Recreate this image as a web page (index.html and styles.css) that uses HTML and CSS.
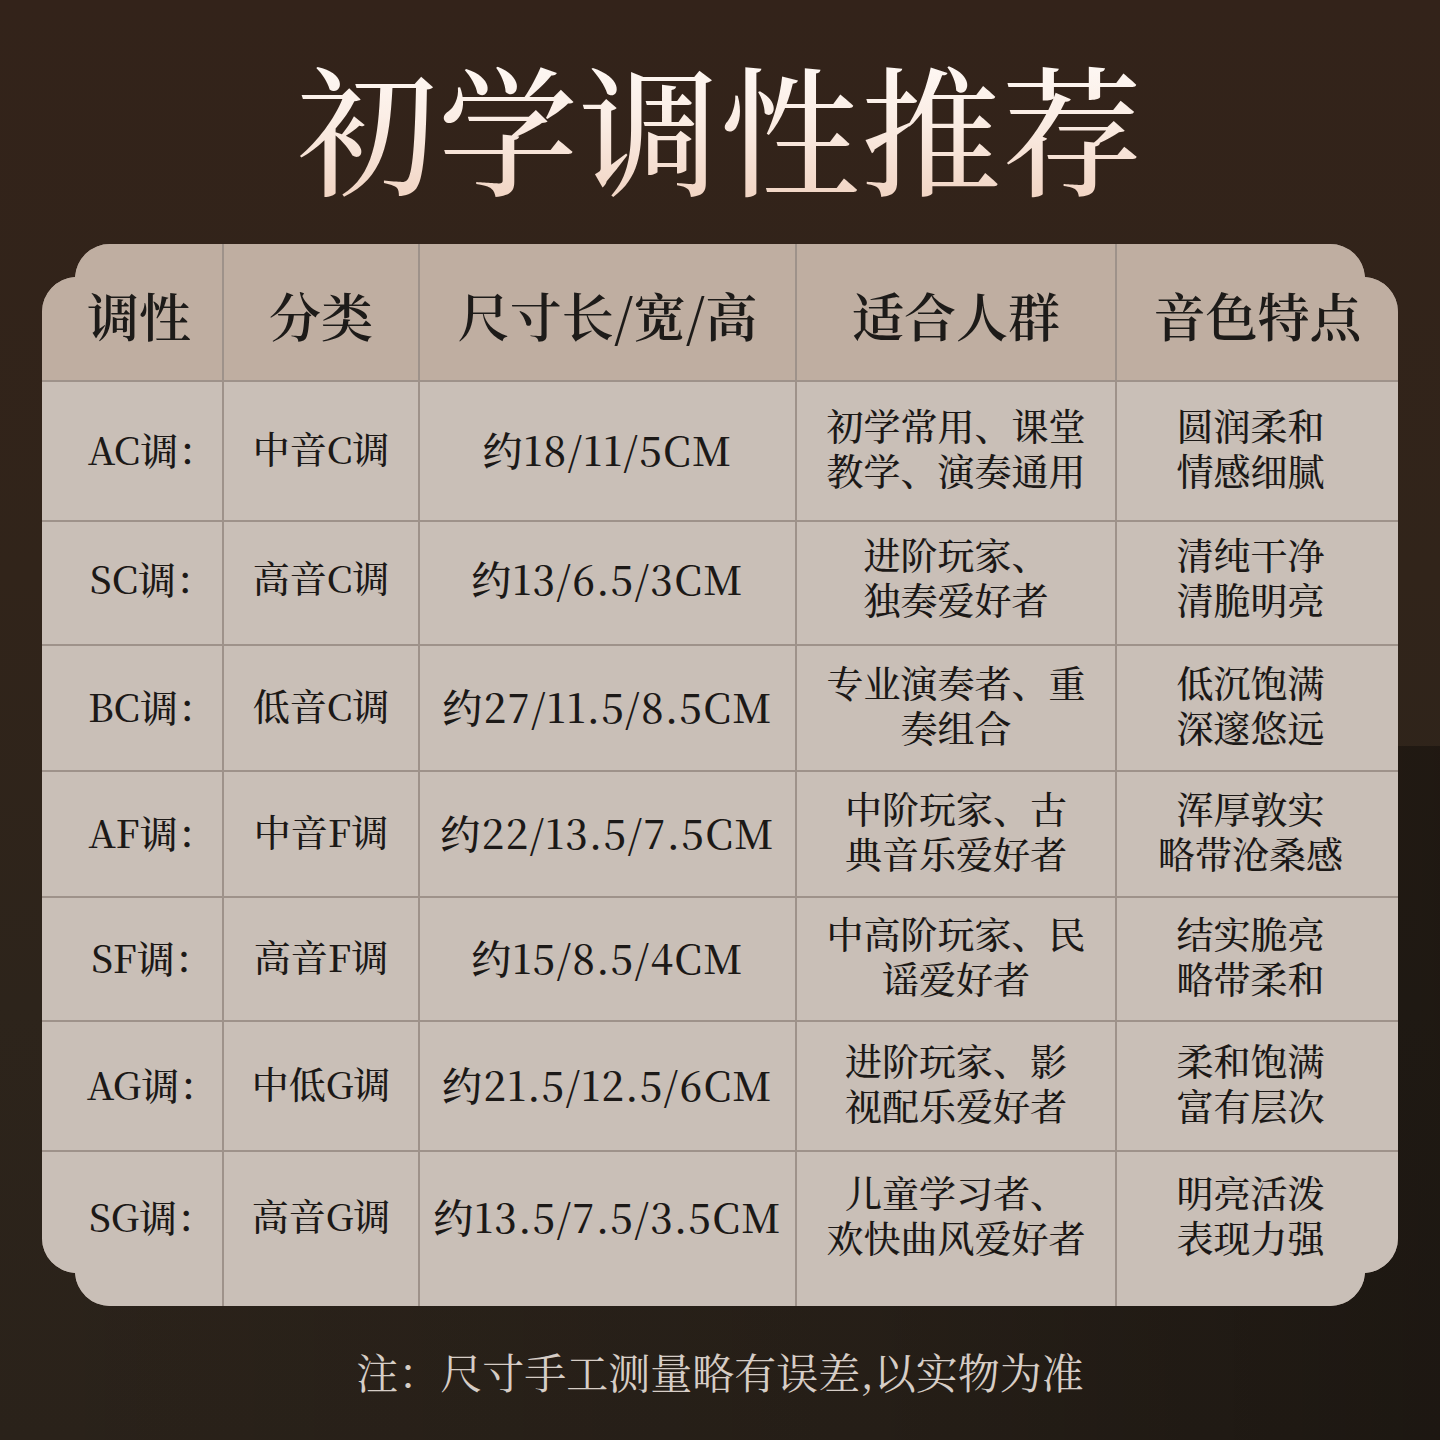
FILE: index.html
```html
<!DOCTYPE html>
<html lang="zh-CN">
<head>
<meta charset="utf-8">
<title>初学调性推荐</title>
<link rel="stylesheet" href="styles.css">
</head>
<body>
<div class="page">
  <header class="title-area">
    <h1 class="title">初学调性推荐</h1>
  </header>
  <div class="table">
    <div class="cell head first">调性</div>
    <div class="cell head">分类</div>
    <div class="cell head">尺寸长/宽/高</div>
    <div class="cell head">适合人群</div>
    <div class="cell head">音色特点</div>

    <div class="cell key">AC调：</div>
    <div class="cell">中音C调</div>
    <div class="cell size">约18/11/5CM</div>
    <div class="cell">初学常用、课堂<br>教学、演奏通用</div>
    <div class="cell tone">圆润柔和<br>情感细腻</div>

    <div class="cell key up">SC调：</div>
    <div class="cell up">高音C调</div>
    <div class="cell size up">约13/6.5/3CM</div>
    <div class="cell up">进阶玩家、<br>独奏爱好者</div>
    <div class="cell tone up">清纯干净<br>清脆明亮</div>

    <div class="cell key">BC调：</div>
    <div class="cell">低音C调</div>
    <div class="cell size">约27/11.5/8.5CM</div>
    <div class="cell">专业演奏者、重<br>奏组合</div>
    <div class="cell tone">低沉饱满<br>深邃悠远</div>

    <div class="cell key">AF调：</div>
    <div class="cell">中音F调</div>
    <div class="cell size">约22/13.5/7.5CM</div>
    <div class="cell">中阶玩家、古<br>典音乐爱好者</div>
    <div class="cell tone">浑厚敦实<br>略带沧桑感</div>

    <div class="cell key">SF调：</div>
    <div class="cell">高音F调</div>
    <div class="cell size">约15/8.5/4CM</div>
    <div class="cell">中高阶玩家、民<br>谣爱好者</div>
    <div class="cell tone">结实脆亮<br>略带柔和</div>

    <div class="cell key">AG调：</div>
    <div class="cell">中低G调</div>
    <div class="cell size">约21.5/12.5/6CM</div>
    <div class="cell">进阶玩家、影<br>视配乐爱好者</div>
    <div class="cell tone">柔和饱满<br>富有层次</div>

    <div class="cell key last">SG调：</div>
    <div class="cell last">高音G调</div>
    <div class="cell size last">约13.5/7.5/3.5CM</div>
    <div class="cell last">儿童学习者、<br>欢快曲风爱好者</div>
    <div class="cell tone last">明亮活泼<br>表现力强</div>
  </div>
  <footer class="note">注：尺寸手工测量略有误差,以实物为准</footer>
</div>
</body>
</html>
```

FILE: styles.css
```css
html, body {
  margin: 0;
  padding: 0;
}

body {
  background: #2c231b;
  font-family: "Noto Serif CJK SC", "Source Han Serif SC", "Liberation Serif", "Noto Sans CJK SC", serif;
}

.page {
  width: 1440px;
  height: 1440px;
  display: flex;
  flex-direction: column;
  align-items: center;
  background:
    linear-gradient(to right, rgba(0,0,0,0) 0%, rgba(0,0,0,0.12) 60%, rgba(0,0,0,0.32) 100%) 0 746px / 1440px 694px no-repeat,
    linear-gradient(to bottom, #33231a 0%, #31241a 40%, #2d241b 70%, #2a221a 100%);
}

.title-area {
  height: 244px;
  width: 100%;
  display: flex;
  justify-content: center;
  align-items: flex-start;
}

.title {
  margin: 33px 0 0 0;
  font-size: 140px;
  line-height: 184px;
  font-weight: 500;
  letter-spacing: 1px;
  background: linear-gradient(to bottom, #fffdfb 0%, #fbeee6 45%, #efcfbc 100%);
  -webkit-background-clip: text;
  background-clip: text;
  color: transparent;
}

.table {
  width: 1356px;
  height: 1062px;
  display: grid;
  grid-template-columns: 180px 194px 375px 318px 281px;
  grid-template-rows: 136px 138px 122px 124px 124px 122px 128px 156px;
  column-gap: 2px;
  row-gap: 2px;
  background: #9e928a;
  clip-path: path("M 68 0 L 1288 0 A 35 35 0 0 1 1323 33 A 35 35 0 0 1 1356 68 L 1356 994 A 35 35 0 0 1 1323 1029 A 35 35 0 0 1 1288 1062 L 68 1062 A 35 35 0 0 1 33 1029 A 35 35 0 0 1 0 994 L 0 68 A 35 35 0 0 1 33 33 A 35 35 0 0 1 68 0 Z");
}

.cell {
  background: #c9bfb7;
  color: #1c1917;
  display: flex;
  align-items: center;
  justify-content: center;
  text-align: center;
  font-size: 37px;
  line-height: 45px;
  font-weight: 500;
  padding-bottom: 6px;
  box-sizing: border-box;
}

.cell.head {
  background: #bfaea1;
  font-size: 52px;
  font-weight: 600;
  color: #1d1b19;
  padding-bottom: 0;
  padding-top: 4px;
}

.cell.head.first {
  padding-left: 14px;
}

.cell.key {
  font-size: 38px;
  padding-left: 40px;
}

.cell.size {
  font-size: 40px;
  letter-spacing: 1.2px;
}

.cell.tone {
  padding-right: 14px;
}

.cell.up {
  padding-bottom: 12px;
}

.cell.last {
  padding-bottom: 30px;
}

.note {
  flex: 1;
  display: flex;
  align-items: center;
  justify-content: center;
  font-size: 42px;
  color: #d6cdc6;
  font-weight: 400;
  padding-bottom: 4px;
}
```
